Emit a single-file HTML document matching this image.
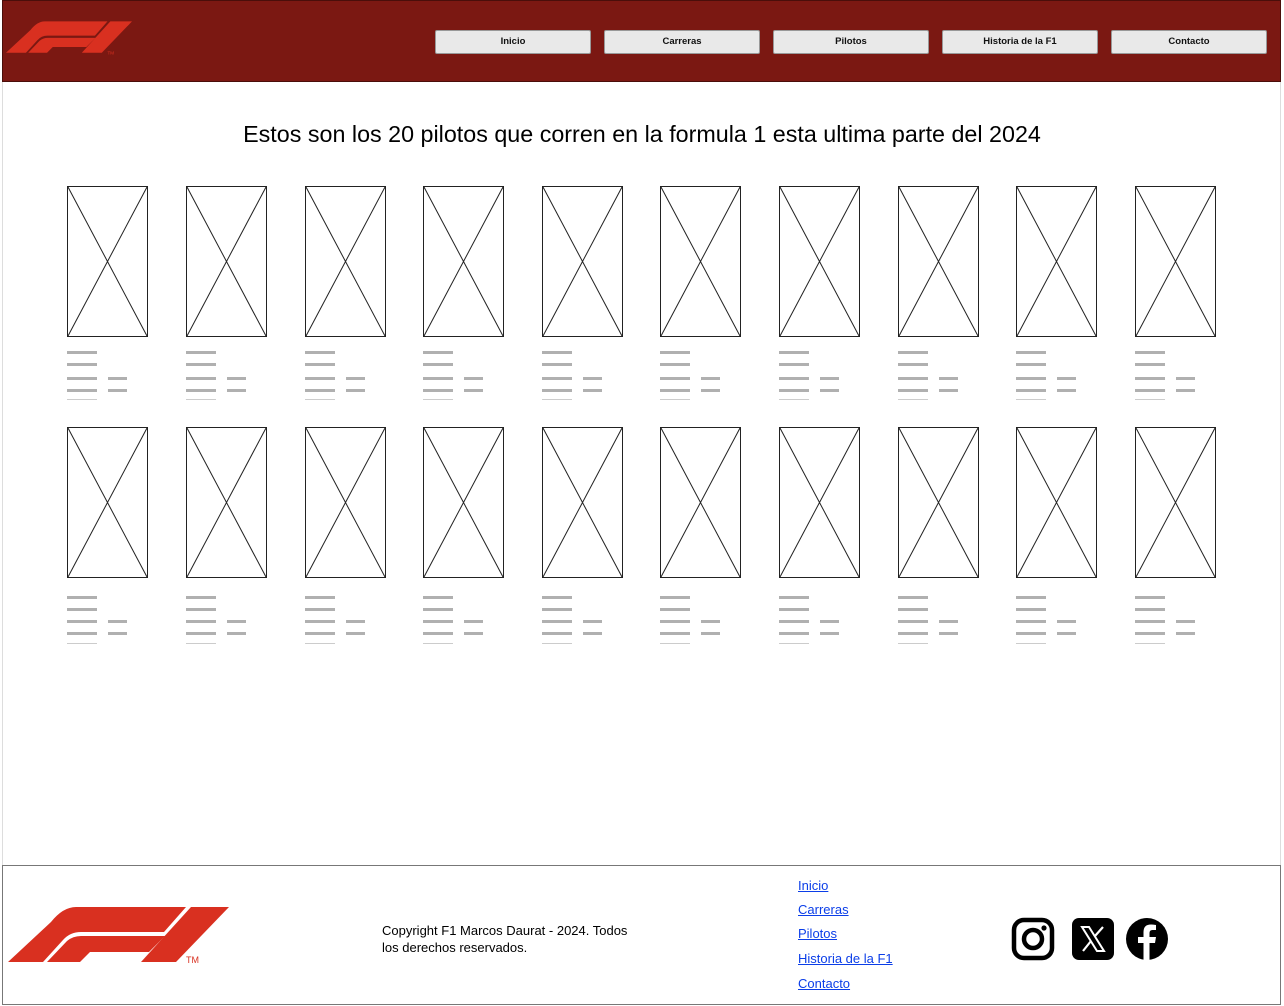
<!DOCTYPE html>
<html><head><meta charset="utf-8"><style>
*{margin:0;padding:0;box-sizing:border-box}
body{width:1284px;height:1006px;background:#fff;font-family:"Liberation Sans",Arial,sans-serif;position:relative;overflow:hidden}
.hdr{position:absolute;left:2px;top:0;width:1279px;height:82px;background:#7b1812;border:1px solid #4a0e0a}
.btn{position:absolute;top:29px;width:156px;height:24px;background:#e9e9e9;border:1px solid #999;border-radius:2px;font-size:9.5px;font-weight:bold;text-align:center;line-height:22px;color:#111}
.side{position:absolute;top:82px;width:1px;height:783px;background:#ddd}
h1{position:absolute;top:121px;left:0;width:1284px;text-align:center;font-size:23.3px;font-weight:normal;color:#000;white-space:nowrap}
.card{position:absolute;width:81px}
.ph{width:81px;height:151px;border:1px solid #222}
.b{position:absolute;height:3px;background:#b0b0b0}
.ftr{position:absolute;left:2px;top:865px;width:1279px;height:140px;border:1px solid #777}
.ftxt{position:absolute;left:382px;top:922px;font-size:13px;line-height:17px;color:#000;width:258px}
.lk{position:absolute;left:798px;font-size:13px;color:#0b3ee8;text-decoration:underline}
</style></head><body>
<div class="hdr">
<svg style="position:absolute;left:3px;top:20px" width="126" height="35" viewBox="0 0 221 60"><g fill="#d93020"><path d="M0 55 L43 15 Q55 0 68 0 L178 0 L156 25 L73 25 Q62 25 55 33 L35 55 Z"/><path d="M39 55 L59 34 Q65 29 73 29 L157 29 L141 45 L82 45 L72 55 Z"/><path d="M133 55 L183 0 L221 0 L168 55 Z"/><text x="178" y="58" font-size="8" font-family="Liberation Sans">TM</text></g></svg>
<div class="btn" style="left:432px">Inicio</div>
<div class="btn" style="left:601px">Carreras</div>
<div class="btn" style="left:770px">Pilotos</div>
<div class="btn" style="left:939px">Historia de la F1</div>
<div class="btn" style="left:1108px">Contacto</div>
</div>
<div class="side" style="left:2px"></div><div class="side" style="left:1280px"></div>
<h1>Estos son los 20 pilotos que corren en la formula 1 esta ultima parte del 2024</h1>
<div id="cards"></div>
<script>
var xs=[67,186,305,423,542,660,779,898,1016,1135],h='';
[[186,351,[351,363,377,389,399]],[427,596,[596,608,620,632,643]]].forEach(function(r){
xs.forEach(function(x){
h+='<div class="card" style="left:'+x+'px;top:'+r[0]+'px"><div class="ph"><svg width="79" height="149"><line x1="0" y1="0" x2="79" y2="149" stroke="#222" stroke-width="1"/><line x1="79" y1="0" x2="0" y2="149" stroke="#222" stroke-width="1"/></svg></div></div>';
var L=r[2];
h+='<div class="b" style="left:'+x+'px;top:'+L[0]+'px;width:30px"></div>';
h+='<div class="b" style="left:'+x+'px;top:'+L[1]+'px;width:30px"></div>';
h+='<div class="b" style="left:'+x+'px;top:'+L[2]+'px;width:30px"></div><div class="b" style="left:'+(x+41)+'px;top:'+L[2]+'px;width:19px"></div>';
h+='<div class="b" style="left:'+x+'px;top:'+L[3]+'px;width:30px"></div><div class="b" style="left:'+(x+41)+'px;top:'+L[3]+'px;width:19px"></div>';
h+='<div class="b" style="left:'+x+'px;top:'+L[4]+'px;width:30px;height:1px;background:#ccc"></div>';
});});
document.getElementById('cards').innerHTML=h;
</script>
<div class="ftr">
<svg style="position:absolute;left:5px;top:41px" width="221" height="60" viewBox="0 0 221 60"><g fill="#d93020"><path d="M0 55 L43 15 Q55 0 68 0 L178 0 L156 25 L73 25 Q62 25 55 33 L35 55 Z"/><path d="M39 55 L59 34 Q65 29 73 29 L157 29 L141 45 L82 45 L72 55 Z"/><path d="M133 55 L183 0 L221 0 L168 55 Z"/><text x="178" y="56" font-size="9" font-family="Liberation Sans">TM</text></g></svg>
</div>
<div class="ftxt">Copyright F1 Marcos Daurat - 2024. Todos los derechos reservados.</div>
<div class="lk" style="top:878px">Inicio</div>
<div class="lk" style="top:902px">Carreras</div>
<div class="lk" style="top:926px">Pilotos</div>
<div class="lk" style="top:951px">Historia de la F1</div>
<div class="lk" style="top:976px">Contacto</div>
<svg style="position:absolute;left:1011px;top:917px" width="44" height="44" viewBox="0 0 44 44"><rect x="3" y="3" width="38" height="38" rx="10" fill="none" stroke="#000" stroke-width="4.5"/><circle cx="22" cy="22" r="9" fill="none" stroke="#000" stroke-width="4.5"/><circle cx="33" cy="11" r="2.6" fill="#000"/></svg>
<svg style="position:absolute;left:1071px;top:917px" width="44" height="44" viewBox="0 0 44 44"><rect x="1" y="1" width="42" height="42" rx="7" fill="#000"/><path d="M11 10 H18 L33 34 H26 Z" fill="none" stroke="#fff" stroke-width="2"/><path d="M32 10 L24 19 M20 24 L12 34" stroke="#fff" stroke-width="2.2"/></svg>
<svg style="position:absolute;left:1125px;top:917px" width="44" height="44" viewBox="0 0 44 44"><circle cx="22" cy="22" r="21" fill="#000"/><path d="M24.5 44 V26 H30 L31 20 H24.5 V16 Q24.5 13 27.5 13 H31 V8 Q28 7.5 26 7.5 Q18.5 7.5 18.5 15 V20 H13 V26 H18.5 V44 Z" fill="#fff"/></svg>
</body></html>
